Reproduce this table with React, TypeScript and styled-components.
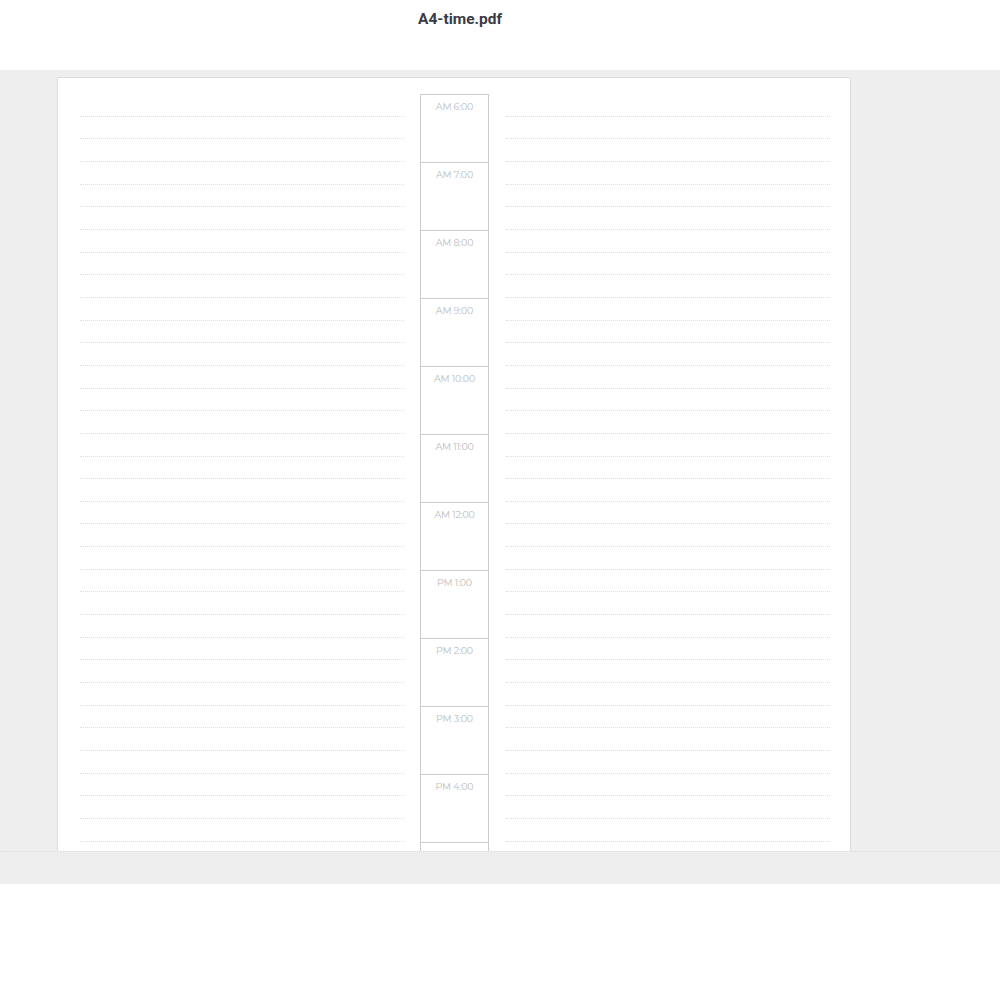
import styled, { createGlobalStyle } from "styled-components";

const GlobalStyle = createGlobalStyle`
    html, body {
        margin: 0;
        padding: 0;
        background: #ffffff;
    }
`;

const Header = styled.header`
    height: 70px;
    display: flex;
    justify-content: center;
    padding-right: 80px;
    box-sizing: border-box;
`;

const Title = styled.h1`
    margin: 10px 0 0;
    font-family: Roboto, "Liberation Sans", sans-serif;
    font-size: 15.5px;
    font-weight: 700;
    color: #3b3b45;
    line-height: 18px;
`;

const Viewer = styled.div`
    height: 814px;
    background-color: #eeeeee;
    display: flex;
    flex-direction: column;
`;

const ScrollArea = styled.div`
    height: 782px;
    overflow: hidden;
    padding: 7px 0 0 57px;
    box-sizing: border-box;
`;

const BottomBar = styled.div`
    height: 32px;
    border-top: 1px dotted #dcdcdc;
`;

const Page = styled.div`
    width: 794px;
    height: 1123px;
    box-sizing: border-box;
    background: #ffffff;
    border: 1px solid #dddddd;
    padding: 16px 0 0 22px;
    display: flex;
    gap: 16px;
`;

const Lines = styled.div<{ $left?: boolean }>`
    width: 324px;
    display: flex;
    flex-direction: column;
    margin-left: ${(p) => (p.$left ? "0" : "1px")};
`;

const Line = styled.div`
    height: calc(68px / 3);
    flex-shrink: 0;
    box-sizing: border-box;
    border-bottom: 1px dotted #dedede;
`;

const TimeColumn = styled.div`
    width: 69px;
    display: flex;
    flex-direction: column;
`;

const TimeBox = styled.div`
    height: 68px;
    flex-shrink: 0;
    box-sizing: border-box;
    border: 1px solid #cccccc;
    border-bottom: none;
    text-align: center;
    padding-top: 6px;
    font-family: Montserrat, "Noto Sans", sans-serif;
    font-size: 9.5px;
    color: #bdbdbd;
    letter-spacing: -0.2px;
`;

const times = [
    "AM 6:00", "AM 7:00", "AM 8:00", "AM 9:00", "AM 10:00", "AM 11:00", "AM 12:00",
    "PM 1:00", "PM 2:00", "PM 3:00", "PM 4:00", "PM 5:00",
];

const lineCount = times.length * 3;

export default function App() {
    return (
        <>
            <GlobalStyle />
            <Header>
                <Title>A4-time.pdf</Title>
            </Header>
            <Viewer>
                <ScrollArea>
                    <Page>
                        <Lines $left>
                            {Array.from({ length: lineCount }, (_, i) => (
                                <Line key={i} />
                            ))}
                        </Lines>
                        <TimeColumn>
                            {times.map((t) => (
                                <TimeBox key={t}>{t}</TimeBox>
                            ))}
                        </TimeColumn>
                        <Lines>
                            {Array.from({ length: lineCount }, (_, i) => (
                                <Line key={i} />
                            ))}
                        </Lines>
                    </Page>
                </ScrollArea>
                <BottomBar />
            </Viewer>
        </>
    );
}
